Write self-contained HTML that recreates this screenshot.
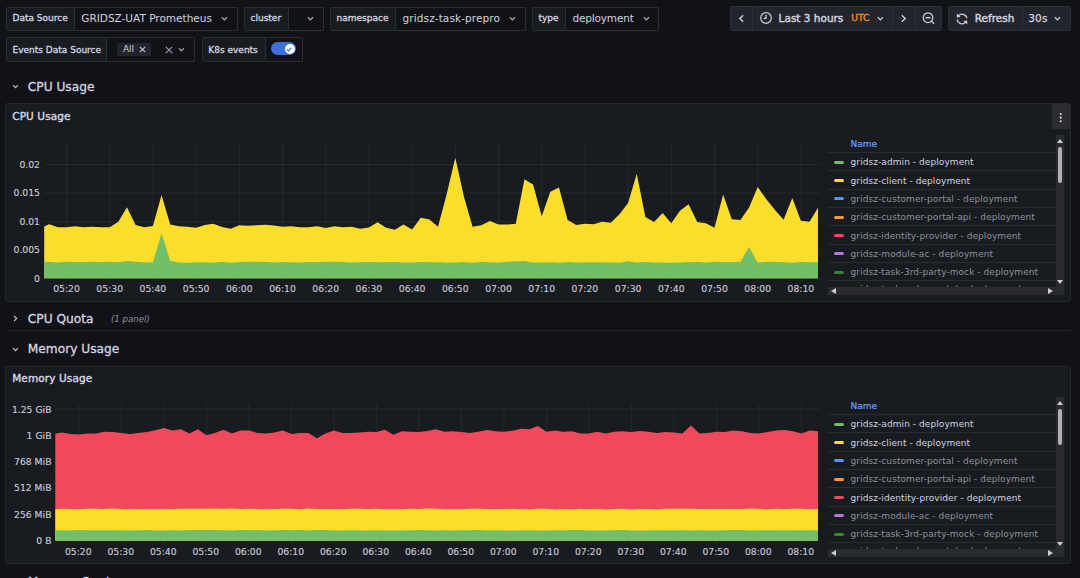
<!DOCTYPE html>
<html><head><meta charset="utf-8"><title>Kubernetes / Compute Resources</title>
<style>
*{box-sizing:border-box;margin:0;padding:0}
html,body{width:1080px;height:578px;overflow:hidden;background:#111217;color:#ccccdc;font-family:"DejaVu Sans", "Liberation Sans", sans-serif;}
body{position:relative}
.abs{position:absolute}
.vg{position:absolute;height:24.25px;display:flex;border-radius:1.5px}
.vg .lb{height:100%;background:#181b1f;border:0.75px solid #2c2e35;border-radius:1.5px 0 0 1.5px;font-size:9px;font-weight:500;display:flex;align-items:center;padding:0 0 0.6px 5.5px;color:#d6d6e4;white-space:nowrap;-webkit-text-stroke:0.3px #d6d6e4}
.vg .vl{height:100%;background:#111217;border:0.75px solid #2c2e35;border-left:none;border-radius:0 1.5px 1.5px 0;font-size:10.5px;display:flex;align-items:center;padding:0 0 1.4px 6.8px;white-space:nowrap;position:relative;color:#d2d2e0}
.chv{position:absolute;top:50%;margin-top:-2.6px;color:#adaebb}
.tb{position:absolute;top:6.3px;height:24.5px;background:#22252b;border:0.75px solid #2c2f36;border-radius:1.5px}
.tb .sep{position:absolute;top:0;bottom:0;width:0.75px;background:#2e3138}
.tbt{position:absolute;font-size:10.5px;font-weight:500;white-space:nowrap;color:#d2d2e0;top:-0.9px;height:100%;display:flex;align-items:center;-webkit-text-stroke:0.45px #d2d2e0}
.rowt{position:absolute;font-size:12.2px;font-weight:500;white-space:nowrap;color:#d5d5e3;-webkit-text-stroke:0.3px #d5d5e3;line-height:14px}
.panel{position:absolute;left:5.2px;width:1065.7px;height:198.2px;background:#181b1f;border:0.75px solid #26282e;border-radius:2.6px}
.pt{position:absolute;left:6px;top:5.3px;font-size:10.5px;font-weight:500;color:#d6d6e4;-webkit-text-stroke:0.4px #d6d6e4;line-height:12px;white-space:nowrap;letter-spacing:0.12px}
.ax{font-size:9.25px;stroke:#c8c9d6;stroke-width:0.15px;fill:#c8c9d6;font-family:"DejaVu Sans", "Liberation Sans", sans-serif}
svg.ch{position:absolute;left:0;top:0;width:1080px;height:578px;pointer-events:none}
.lg{position:absolute;left:828px;width:236.2px;height:157.8px}
.lgin{position:absolute;left:0;top:0;width:228px;height:149.3px;overflow:hidden}
.lh{height:15.6px;border-bottom:0.75px solid #2a2c32;font-size:9px;font-weight:500;color:#6e9fff;padding-left:22.6px;line-height:13.2px;-webkit-text-stroke:0.2px #6e9fff}
.lr{height:18.33px;border-bottom:0.75px solid #2a2c32;font-size:9px;color:#d4d4e2;display:flex;align-items:center;white-space:nowrap;letter-spacing:0.07px;padding-top:0.9px}
.lr.dim{color:#8f909c}
.lr i{display:block;width:10.6px;height:3px;border-radius:1.5px;margin-left:5.8px;margin-right:6.2px;flex:none}
.vsb{position:absolute;left:228.1px;top:-2.5px;width:8.1px;height:159.8px;background:#2a2b2e}
.vsb u{position:absolute;left:1.9px;width:4px;top:12px;height:35.8px;background:#b3b3b5;border-radius:2px}
.vsb .up{position:absolute;left:0.9px;top:3.8px;border-left:3px solid transparent;border-right:3px solid transparent;border-bottom:4px solid #cfcfcf}
.vsb .dn{position:absolute;left:0.9px;top:145.2px;border-left:3px solid transparent;border-right:3px solid transparent;border-top:4px solid #cfcfcf}
.hsb{position:absolute;left:0;top:149.4px;width:236.2px;height:7.9px;background:#2a2b2e}
.hsb .lf{position:absolute;left:3.2px;top:1.1px;border-top:3px solid transparent;border-bottom:3px solid transparent;border-right:5px solid #cfcfcf}
.hsb .rt{position:absolute;left:219.8px;top:1.1px;border-top:3px solid transparent;border-bottom:3px solid transparent;border-left:5px solid #cfcfcf}
.menu{position:absolute;right:0.1px;top:-0.5px;width:17.8px;height:25.1px;background:#2b2d32;border-radius:1.5px}
.menu svg{position:absolute;left:0;top:0}
</style></head><body>

<!-- variables row 1 -->
<div class="vg" style="left:6px;top:6.5px"><div class="lb" style="width:68.5px">Data Source</div><div class="vl" style="width:163.5px">GRIDSZ-UAT Prometheus<svg class="chv" style="left:146.8px" viewBox="0 0 8 6" width="6.8" height="5.1"><path d="M1 1.5 L4 4.5 L7 1.5" fill="none" stroke="currentColor" stroke-width="1.35"/></svg></div></div>
<div class="vg" style="left:244px;top:6.5px"><div class="lb" style="width:44.8px">cluster</div><div class="vl" style="width:35px"><svg class="chv" style="left:18.2px" viewBox="0 0 8 6" width="6.8" height="5.1"><path d="M1 1.5 L4 4.5 L7 1.5" fill="none" stroke="currentColor" stroke-width="1.35"/></svg></div></div>
<div class="vg" style="left:330px;top:6.5px"><div class="lb" style="width:65.8px">namespace</div><div class="vl" style="width:130px;letter-spacing:0.1px">gridsz-task-prepro<svg class="chv" style="left:113.4px" viewBox="0 0 8 6" width="6.8" height="5.1"><path d="M1 1.5 L4 4.5 L7 1.5" fill="none" stroke="currentColor" stroke-width="1.35"/></svg></div></div>
<div class="vg" style="left:532px;top:6.5px"><div class="lb" style="width:33.6px">type</div><div class="vl" style="width:93.6px;letter-spacing:-0.15px">deployment<svg class="chv" style="left:77.5px" viewBox="0 0 8 6" width="6.8" height="5.1"><path d="M1 1.5 L4 4.5 L7 1.5" fill="none" stroke="currentColor" stroke-width="1.35"/></svg></div></div>

<!-- variables row 2 -->
<div class="vg" style="left:6px;top:37.3px"><div class="lb" style="width:101.3px;padding-bottom:0;padding-top:0.4px">Events Data Source</div><div class="vl" style="width:88px;padding-left:0">
<span class="abs" style="left:9.5px;top:4.6px;width:34.6px;height:13.6px;background:#22252b;border-radius:1.5px"></span>
<span class="abs" style="left:15.6px;top:4.5px;font-size:9px;line-height:13.5px;color:#ccccdc">All</span>
<svg class="abs" style="left:31.8px;top:8.2px" width="7" height="7" viewBox="0 0 7 7"><path d="M0.8 0.8L6.2 6.2M6.2 0.8L0.8 6.2" stroke="#c8c8d6" stroke-width="1.1"/></svg>
<svg class="abs" style="left:57.6px;top:7.8px" width="8" height="8" viewBox="0 0 8 8"><path d="M0.8 0.8L7.2 7.2M7.2 0.8L0.8 7.2" stroke="#a4a5b2" stroke-width="1.05"/></svg>
<svg class="chv" style="left:71.2px;color:#a4a5b2" viewBox="0 0 8 6" width="6.8" height="5.1"><path d="M1 1.5 L4 4.5 L7 1.5" fill="none" stroke="currentColor" stroke-width="1.35"/></svg>
</div></div>
<div class="vg" style="left:201.8px;top:37.3px"><div class="lb" style="width:64px;padding-bottom:0;padding-top:0.4px">K8s events</div><div class="vl" style="width:37px;padding:0">
<span class="abs" style="left:5.6px;top:4.1px;width:24.8px;height:13px;border-radius:6.5px;background:#3d71d9"></span>
<span class="abs" style="left:18.9px;top:5.6px;width:10px;height:10px;border-radius:50%;background:#fff"></span>
<svg class="abs" style="left:20.7px;top:7.5px" width="6.4" height="6.4" viewBox="0 0 8 8"><path d="M1.2 4.2L3.2 6.2L6.9 2" fill="none" stroke="#3d71d9" stroke-width="1.5"/></svg>
</div></div>

<!-- time picker -->
<div class="tb" style="left:730.3px;width:211.5px">
<span class="sep" style="left:20.8px"></span><span class="sep" style="left:161.2px"></span><span class="sep" style="left:184.1px"></span>
<svg class="abs" style="left:6.7px;top:6.6px" width="7" height="9" viewBox="0 0 7 9"><path d="M5.2 1.2L1.8 4.5L5.2 7.8" fill="none" stroke="#d0d0dc" stroke-width="1.4"/></svg>
<svg class="abs" style="left:27.4px;top:4px" width="14" height="14" viewBox="0 0 14 14"><circle cx="7" cy="7" r="5.3" fill="none" stroke="#cfcfdd" stroke-width="1.2"/><path d="M7 3.8V7.3H4.6" fill="none" stroke="#cfcfdd" stroke-width="1.3"/></svg>
<span class="tbt" style="left:47.3px">Last 3 hours</span>
<span class="tbt" style="left:119.9px;font-size:9.2px;color:#ec8a2c;-webkit-text-stroke:0.4px #ec8a2c">UTC</span>
<svg class="abs" style="left:145.4px;top:8.6px" width="6.8" height="5.1" viewBox="0 0 8 6"><path d="M1 1.5 L4 4.5 L7 1.5" fill="none" stroke="#d0d0dc" stroke-width="1.4"/></svg>
<svg class="abs" style="left:168.3px;top:6.6px" width="7" height="9" viewBox="0 0 7 9"><path d="M1.8 1.2L5.2 4.5L1.8 7.8" fill="none" stroke="#d0d0dc" stroke-width="1.4"/></svg>
<svg class="abs" style="left:189.6px;top:4px" width="14" height="14" viewBox="0 0 14 14"><circle cx="7" cy="6.7" r="4.8" fill="none" stroke="#cfcfdd" stroke-width="1.25"/><path d="M10.5 10.2L13.1 12.8" fill="none" stroke="#cfcfdd" stroke-width="1.25"/><path d="M4.5 6.7H9.5" fill="none" stroke="#cfcfdd" stroke-width="1.5"/></svg>
</div>
<!-- refresh -->
<div class="tb" style="left:948.2px;width:122.5px">
<span class="sep" style="left:73.2px"></span>
<svg class="abs" style="left:5.9px;top:4.5px" width="14" height="14" viewBox="0 0 14 14"><g fill="none" stroke="#cfcfdd" stroke-width="1.25"><path d="M3.3 3.9A4.9 4.9 0 0 1 11.85 6.3"/><path d="M10.7 10.1A4.9 4.9 0 0 1 2.15 7.7"/></g><path d="M1.7 1.6L1.9 5.6L5.6 4.9Z M12.3 12.4L12.1 8.4L8.4 9.1Z" fill="#cfcfdd"/></svg>
<span class="tbt" style="left:25.6px">Refresh</span>
<span class="tbt" style="left:79px;font-weight:400;letter-spacing:0.2px;-webkit-text-stroke:0.25px #d2d2e0">30s</span>
<svg class="abs" style="left:105px;top:8.6px" width="6.8" height="5.1" viewBox="0 0 8 6"><path d="M1 1.5 L4 4.5 L7 1.5" fill="none" stroke="#d0d0dc" stroke-width="1.4"/></svg>
</div>

<!-- row: CPU Usage -->
<svg class="abs" style="left:12.4px;top:84.4px" width="7" height="5" viewBox="0 0 8 6"><path d="M1 1.3 L4 4.4 L7 1.3" fill="none" stroke="#c6c6d4" stroke-width="1.3"/></svg>
<div class="rowt" style="left:27.8px;top:79.9px">CPU Usage</div>

<div class="panel" style="top:103.4px"><div class="pt">CPU Usage</div><div class="menu"><svg width="17.8" height="24.4" viewBox="0 0 17.8 24.4"><circle cx="8.75" cy="10" r="1.05" fill="#d4d4de"/><circle cx="8.75" cy="13.65" r="1.05" fill="#d4d4de"/><circle cx="8.75" cy="17.3" r="1.05" fill="#d4d4de"/></svg></div></div>
<div class="lg" style="top:137.5px">
<div class="lgin">
<div class="lh">Name</div>
<div class="lr"><i style="background:#73bf69"></i><span>gridsz-admin - deployment</span></div>
<div class="lr"><i style="background:#fade2a"></i><span>gridsz-client - deployment</span></div>
<div class="lr dim"><i style="background:#5794f2"></i><span>gridsz-customer-portal - deployment</span></div>
<div class="lr dim"><i style="background:#ff9830"></i><span>gridsz-customer-portal-api - deployment</span></div>
<div class="lr dim"><i style="background:#f2495c"></i><span>gridsz-identity-provider - deployment</span></div>
<div class="lr dim"><i style="background:#b877d9"></i><span>gridsz-module-ac - deployment</span></div>
<div class="lr dim"><i style="background:#37872d"></i><span>gridsz-task-3rd-party-mock - deployment</span></div>
<div class="lr dim"><i style="background:#e0b400"></i><span style="position:relative;top:-1.4px">gridsz-task-order-portal - deployment</span></div>
</div>
<div class="vsb"><b class="up"></b><u></u><b class="dn"></b></div>
<div class="hsb"><b class="lf"></b><b class="rt"></b></div>
</div>

<!-- row: CPU Quota -->
<svg class="abs" style="left:13.4px;top:315.2px" width="5" height="7" viewBox="0 0 6 8"><path d="M1.3 1 L4.4 4 L1.3 7" fill="none" stroke="#c6c6d4" stroke-width="1.3"/></svg>
<div class="rowt" style="left:27.8px;top:312.2px">CPU Quota</div>
<div class="abs" style="left:111px;top:314.1px;font-size:8.6px;font-style:italic;color:#9091a0;line-height:11px">(1 panel)</div>
<div class="abs" style="left:6px;top:330.2px;width:1065px;height:0.75px;background:#222429"></div>

<!-- row: Memory Usage -->
<svg class="abs" style="left:12.4px;top:346.6px" width="7" height="5" viewBox="0 0 8 6"><path d="M1 1.3 L4 4.4 L7 1.3" fill="none" stroke="#c6c6d4" stroke-width="1.3"/></svg>
<div class="rowt" style="left:27.8px;top:341.6px">Memory Usage</div>

<div class="panel" style="top:366px;height:197.8px"><div class="pt">Memory Usage</div></div>
<div class="lg" style="top:399.5px">
<div class="lgin">
<div class="lh">Name</div>
<div class="lr"><i style="background:#73bf69"></i><span>gridsz-admin - deployment</span></div>
<div class="lr"><i style="background:#fade2a"></i><span>gridsz-client - deployment</span></div>
<div class="lr dim"><i style="background:#5794f2"></i><span>gridsz-customer-portal - deployment</span></div>
<div class="lr dim"><i style="background:#ff9830"></i><span>gridsz-customer-portal-api - deployment</span></div>
<div class="lr"><i style="background:#f2495c"></i><span>gridsz-identity-provider - deployment</span></div>
<div class="lr dim"><i style="background:#b877d9"></i><span>gridsz-module-ac - deployment</span></div>
<div class="lr dim"><i style="background:#37872d"></i><span>gridsz-task-3rd-party-mock - deployment</span></div>
<div class="lr dim"><i style="background:#e0b400"></i><span style="position:relative;top:-1.4px">gridsz-task-order-portal - deployment</span></div>
</div>
<div class="vsb"><b class="up"></b><u></u><b class="dn"></b></div>
<div class="hsb"><b class="lf"></b><b class="rt"></b></div>
</div>

<!-- row: Memory Quota (cut off) -->
<div class="rowt" style="left:27.8px;top:575.1px">Memory Quota</div>

<svg class="ch" viewBox="0 0 1080 578">
<clipPath id="c1"><rect x="44.2" y="136.8" width="773.8" height="141.7"/></clipPath>
<line x1="44.2" y1="164.4" x2="821" y2="164.4" stroke="rgba(204,204,220,0.1)" stroke-width="0.8"/>
<line x1="44.2" y1="192.9" x2="821" y2="192.9" stroke="rgba(204,204,220,0.1)" stroke-width="0.8"/>
<line x1="44.2" y1="221.5" x2="821" y2="221.5" stroke="rgba(204,204,220,0.1)" stroke-width="0.8"/>
<line x1="44.2" y1="250" x2="821" y2="250" stroke="rgba(204,204,220,0.1)" stroke-width="0.8"/>
<line x1="44.2" y1="278.5" x2="821" y2="278.5" stroke="rgba(204,204,220,0.1)" stroke-width="0.8"/>
<line x1="66.50" y1="141.8" x2="66.50" y2="281.5" stroke="rgba(204,204,220,0.1)" stroke-width="0.8"/>
<text x="66.50" y="292" text-anchor="middle" class="ax">05:20</text>
<line x1="109.70" y1="141.8" x2="109.70" y2="281.5" stroke="rgba(204,204,220,0.1)" stroke-width="0.8"/>
<text x="109.70" y="292" text-anchor="middle" class="ax">05:30</text>
<line x1="152.90" y1="141.8" x2="152.90" y2="281.5" stroke="rgba(204,204,220,0.1)" stroke-width="0.8"/>
<text x="152.90" y="292" text-anchor="middle" class="ax">05:40</text>
<line x1="196.10" y1="141.8" x2="196.10" y2="281.5" stroke="rgba(204,204,220,0.1)" stroke-width="0.8"/>
<text x="196.10" y="292" text-anchor="middle" class="ax">05:50</text>
<line x1="239.30" y1="141.8" x2="239.30" y2="281.5" stroke="rgba(204,204,220,0.1)" stroke-width="0.8"/>
<text x="239.30" y="292" text-anchor="middle" class="ax">06:00</text>
<line x1="282.50" y1="141.8" x2="282.50" y2="281.5" stroke="rgba(204,204,220,0.1)" stroke-width="0.8"/>
<text x="282.50" y="292" text-anchor="middle" class="ax">06:10</text>
<line x1="325.70" y1="141.8" x2="325.70" y2="281.5" stroke="rgba(204,204,220,0.1)" stroke-width="0.8"/>
<text x="325.70" y="292" text-anchor="middle" class="ax">06:20</text>
<line x1="368.90" y1="141.8" x2="368.90" y2="281.5" stroke="rgba(204,204,220,0.1)" stroke-width="0.8"/>
<text x="368.90" y="292" text-anchor="middle" class="ax">06:30</text>
<line x1="412.10" y1="141.8" x2="412.10" y2="281.5" stroke="rgba(204,204,220,0.1)" stroke-width="0.8"/>
<text x="412.10" y="292" text-anchor="middle" class="ax">06:40</text>
<line x1="455.30" y1="141.8" x2="455.30" y2="281.5" stroke="rgba(204,204,220,0.1)" stroke-width="0.8"/>
<text x="455.30" y="292" text-anchor="middle" class="ax">06:50</text>
<line x1="498.50" y1="141.8" x2="498.50" y2="281.5" stroke="rgba(204,204,220,0.1)" stroke-width="0.8"/>
<text x="498.50" y="292" text-anchor="middle" class="ax">07:00</text>
<line x1="541.70" y1="141.8" x2="541.70" y2="281.5" stroke="rgba(204,204,220,0.1)" stroke-width="0.8"/>
<text x="541.70" y="292" text-anchor="middle" class="ax">07:10</text>
<line x1="584.90" y1="141.8" x2="584.90" y2="281.5" stroke="rgba(204,204,220,0.1)" stroke-width="0.8"/>
<text x="584.90" y="292" text-anchor="middle" class="ax">07:20</text>
<line x1="628.10" y1="141.8" x2="628.10" y2="281.5" stroke="rgba(204,204,220,0.1)" stroke-width="0.8"/>
<text x="628.10" y="292" text-anchor="middle" class="ax">07:30</text>
<line x1="671.30" y1="141.8" x2="671.30" y2="281.5" stroke="rgba(204,204,220,0.1)" stroke-width="0.8"/>
<text x="671.30" y="292" text-anchor="middle" class="ax">07:40</text>
<line x1="714.50" y1="141.8" x2="714.50" y2="281.5" stroke="rgba(204,204,220,0.1)" stroke-width="0.8"/>
<text x="714.50" y="292" text-anchor="middle" class="ax">07:50</text>
<line x1="757.70" y1="141.8" x2="757.70" y2="281.5" stroke="rgba(204,204,220,0.1)" stroke-width="0.8"/>
<text x="757.70" y="292" text-anchor="middle" class="ax">08:00</text>
<line x1="800.90" y1="141.8" x2="800.90" y2="281.5" stroke="rgba(204,204,220,0.1)" stroke-width="0.8"/>
<text x="800.90" y="292" text-anchor="middle" class="ax">08:10</text>
<text x="40" y="167.70" text-anchor="end" class="ax">0.02</text>
<text x="40" y="196.20" text-anchor="end" class="ax">0.015</text>
<text x="40" y="224.80" text-anchor="end" class="ax">0.01</text>
<text x="40" y="253.30" text-anchor="end" class="ax">0.005</text>
<text x="40" y="281.80" text-anchor="end" class="ax">0</text>
<g clip-path="url(#c1)">
<path d="M40.58 278.50 L40.58 228.00 L49.22 224.20 L57.86 227.20 L66.50 227.20 L75.14 226.30 L83.78 227.30 L92.42 226.80 L101.06 227.20 L109.70 227.30 L118.34 221.70 L126.98 207.20 L135.62 225.00 L144.26 227.30 L152.90 226.00 L161.54 195.00 L170.18 224.50 L178.82 226.30 L187.46 226.70 L196.10 227.80 L204.74 225.00 L213.38 223.80 L222.02 227.00 L230.66 228.80 L239.30 225.30 L247.94 225.80 L256.58 225.30 L265.22 224.80 L273.86 225.50 L282.50 226.70 L291.14 226.30 L299.78 227.20 L308.42 227.30 L317.06 226.30 L325.70 228.00 L334.34 226.20 L342.98 227.20 L351.62 226.80 L360.26 228.70 L368.90 227.50 L377.54 222.20 L386.18 227.80 L394.82 229.70 L403.46 224.50 L412.10 229.50 L420.74 217.80 L429.38 219.50 L438.02 226.70 L446.66 194.20 L455.30 157.80 L463.94 196.70 L472.58 226.70 L481.22 225.30 L489.86 221.00 L498.50 224.50 L507.14 224.50 L515.78 223.80 L524.42 179.20 L533.06 184.40 L541.70 216.20 L550.34 191.70 L558.98 187.50 L567.62 220.00 L576.26 225.00 L584.90 223.80 L593.54 224.30 L602.18 221.70 L610.82 222.80 L619.46 214.20 L628.10 203.00 L636.74 173.80 L645.38 217.00 L654.02 222.00 L662.66 213.00 L671.30 223.30 L679.94 210.80 L688.58 204.20 L697.22 222.00 L705.86 223.30 L714.50 227.80 L723.14 194.50 L731.78 219.20 L740.42 220.00 L749.06 207.50 L757.70 187.00 L766.34 199.20 L774.98 210.00 L783.62 219.70 L792.26 198.00 L800.90 220.80 L809.54 221.70 L818.18 207.50 L826.82 215.00 L826.82 278.50 Z" fill="#f9de2b"/>
<path d="M40.58 278.50 L40.58 262.06 L49.22 261.87 L57.86 262.42 L66.50 261.78 L75.14 262.29 L83.78 262.10 L92.42 261.76 L101.06 262.26 L109.70 261.74 L118.34 262.18 L126.98 260.90 L135.62 261.80 L144.26 262.17 L152.90 262.61 L161.54 233.30 L170.18 260.80 L178.82 262.39 L187.46 262.74 L196.10 262.33 L204.74 262.14 L213.38 262.77 L222.02 261.75 L230.66 262.64 L239.30 262.02 L247.94 261.86 L256.58 261.83 L265.22 262.04 L273.86 262.60 L282.50 261.90 L291.14 262.34 L299.78 262.40 L308.42 262.11 L317.06 262.30 L325.70 261.77 L334.34 261.77 L342.98 261.93 L351.62 262.45 L360.26 262.17 L368.90 262.05 L377.54 262.34 L386.18 262.20 L394.82 262.03 L403.46 262.57 L412.10 262.47 L420.74 261.97 L429.38 262.33 L438.02 262.28 L446.66 262.66 L455.30 262.50 L463.94 262.02 L472.58 262.78 L481.22 261.83 L489.86 262.16 L498.50 262.53 L507.14 261.87 L515.78 261.20 L524.42 261.00 L533.06 262.44 L541.70 262.54 L550.34 262.33 L558.98 262.66 L567.62 262.05 L576.26 262.46 L584.90 262.35 L593.54 262.34 L602.18 262.20 L610.82 262.62 L619.46 262.74 L628.10 261.20 L636.74 262.43 L645.38 261.77 L654.02 262.47 L662.66 262.41 L671.30 262.79 L679.94 262.60 L688.58 262.01 L697.22 262.12 L705.86 262.44 L714.50 261.72 L723.14 262.21 L731.78 261.88 L740.42 261.83 L749.06 247.10 L757.70 262.55 L766.34 261.84 L774.98 261.97 L783.62 262.13 L792.26 262.66 L800.90 261.79 L809.54 262.19 L818.18 262.30 L826.82 262.67 L826.82 278.50 Z" fill="#73be69"/>
</g>
<clipPath id="c2"><rect x="55.3" y="399.2" width="762.7" height="141.59999999999997"/></clipPath>
<line x1="55.3" y1="409.2" x2="821" y2="409.2" stroke="rgba(204,204,220,0.1)" stroke-width="0.8"/>
<line x1="55.3" y1="435.2" x2="821" y2="435.2" stroke="rgba(204,204,220,0.1)" stroke-width="0.8"/>
<line x1="55.3" y1="461.6" x2="821" y2="461.6" stroke="rgba(204,204,220,0.1)" stroke-width="0.8"/>
<line x1="55.3" y1="488" x2="821" y2="488" stroke="rgba(204,204,220,0.1)" stroke-width="0.8"/>
<line x1="55.3" y1="514.4" x2="821" y2="514.4" stroke="rgba(204,204,220,0.1)" stroke-width="0.8"/>
<line x1="55.3" y1="540.8" x2="821" y2="540.8" stroke="rgba(204,204,220,0.1)" stroke-width="0.8"/>
<line x1="78.90" y1="404.2" x2="78.90" y2="543.8" stroke="rgba(204,204,220,0.1)" stroke-width="0.8"/>
<text x="78.30" y="554.5" text-anchor="middle" class="ax">05:20</text>
<line x1="121.40" y1="404.2" x2="121.40" y2="543.8" stroke="rgba(204,204,220,0.1)" stroke-width="0.8"/>
<text x="120.80" y="554.5" text-anchor="middle" class="ax">05:30</text>
<line x1="163.90" y1="404.2" x2="163.90" y2="543.8" stroke="rgba(204,204,220,0.1)" stroke-width="0.8"/>
<text x="163.30" y="554.5" text-anchor="middle" class="ax">05:40</text>
<line x1="206.40" y1="404.2" x2="206.40" y2="543.8" stroke="rgba(204,204,220,0.1)" stroke-width="0.8"/>
<text x="205.80" y="554.5" text-anchor="middle" class="ax">05:50</text>
<line x1="248.90" y1="404.2" x2="248.90" y2="543.8" stroke="rgba(204,204,220,0.1)" stroke-width="0.8"/>
<text x="248.30" y="554.5" text-anchor="middle" class="ax">06:00</text>
<line x1="291.40" y1="404.2" x2="291.40" y2="543.8" stroke="rgba(204,204,220,0.1)" stroke-width="0.8"/>
<text x="290.80" y="554.5" text-anchor="middle" class="ax">06:10</text>
<line x1="333.90" y1="404.2" x2="333.90" y2="543.8" stroke="rgba(204,204,220,0.1)" stroke-width="0.8"/>
<text x="333.30" y="554.5" text-anchor="middle" class="ax">06:20</text>
<line x1="376.40" y1="404.2" x2="376.40" y2="543.8" stroke="rgba(204,204,220,0.1)" stroke-width="0.8"/>
<text x="375.80" y="554.5" text-anchor="middle" class="ax">06:30</text>
<line x1="418.90" y1="404.2" x2="418.90" y2="543.8" stroke="rgba(204,204,220,0.1)" stroke-width="0.8"/>
<text x="418.30" y="554.5" text-anchor="middle" class="ax">06:40</text>
<line x1="461.40" y1="404.2" x2="461.40" y2="543.8" stroke="rgba(204,204,220,0.1)" stroke-width="0.8"/>
<text x="460.80" y="554.5" text-anchor="middle" class="ax">06:50</text>
<line x1="503.90" y1="404.2" x2="503.90" y2="543.8" stroke="rgba(204,204,220,0.1)" stroke-width="0.8"/>
<text x="503.30" y="554.5" text-anchor="middle" class="ax">07:00</text>
<line x1="546.40" y1="404.2" x2="546.40" y2="543.8" stroke="rgba(204,204,220,0.1)" stroke-width="0.8"/>
<text x="545.80" y="554.5" text-anchor="middle" class="ax">07:10</text>
<line x1="588.90" y1="404.2" x2="588.90" y2="543.8" stroke="rgba(204,204,220,0.1)" stroke-width="0.8"/>
<text x="588.30" y="554.5" text-anchor="middle" class="ax">07:20</text>
<line x1="631.40" y1="404.2" x2="631.40" y2="543.8" stroke="rgba(204,204,220,0.1)" stroke-width="0.8"/>
<text x="630.80" y="554.5" text-anchor="middle" class="ax">07:30</text>
<line x1="673.90" y1="404.2" x2="673.90" y2="543.8" stroke="rgba(204,204,220,0.1)" stroke-width="0.8"/>
<text x="673.30" y="554.5" text-anchor="middle" class="ax">07:40</text>
<line x1="716.40" y1="404.2" x2="716.40" y2="543.8" stroke="rgba(204,204,220,0.1)" stroke-width="0.8"/>
<text x="715.80" y="554.5" text-anchor="middle" class="ax">07:50</text>
<line x1="758.90" y1="404.2" x2="758.90" y2="543.8" stroke="rgba(204,204,220,0.1)" stroke-width="0.8"/>
<text x="758.30" y="554.5" text-anchor="middle" class="ax">08:00</text>
<line x1="801.40" y1="404.2" x2="801.40" y2="543.8" stroke="rgba(204,204,220,0.1)" stroke-width="0.8"/>
<text x="800.80" y="554.5" text-anchor="middle" class="ax">08:10</text>
<text x="51.5" y="412.50" text-anchor="end" class="ax">1.25 GiB</text>
<text x="51.5" y="438.50" text-anchor="end" class="ax">1 GiB</text>
<text x="51.5" y="464.90" text-anchor="end" class="ax">768 MiB</text>
<text x="51.5" y="491.30" text-anchor="end" class="ax">512 MiB</text>
<text x="51.5" y="517.70" text-anchor="end" class="ax">256 MiB</text>
<text x="51.5" y="544.10" text-anchor="end" class="ax">0 B</text>
<g clip-path="url(#c2)">
<path d="M53.40 540.80 L53.40 434.00 L61.90 432.40 L70.40 434.00 L78.90 434.50 L87.40 433.60 L95.90 433.40 L104.40 431.70 L112.90 431.90 L121.40 433.10 L129.90 434.00 L138.40 433.10 L146.90 432.10 L155.40 430.20 L163.90 428.00 L172.40 430.50 L180.90 429.30 L189.40 433.40 L197.90 429.30 L206.40 435.30 L214.90 432.90 L223.40 429.70 L231.90 433.40 L240.40 430.50 L248.90 430.50 L257.40 432.90 L265.90 433.40 L274.40 432.40 L282.90 430.50 L291.40 434.00 L299.90 432.90 L308.40 432.90 L316.90 438.20 L325.40 433.40 L333.90 430.50 L342.40 432.90 L350.90 432.90 L359.40 432.40 L367.90 431.70 L376.40 432.10 L384.90 429.70 L393.40 434.80 L401.90 431.20 L410.40 431.70 L418.90 432.10 L427.40 431.00 L435.90 429.30 L444.40 431.70 L452.90 431.20 L461.40 432.10 L469.90 433.10 L478.40 431.70 L486.90 430.00 L495.40 431.20 L503.90 431.70 L512.40 430.70 L520.90 428.80 L529.40 429.30 L537.90 426.10 L546.40 431.70 L554.90 430.50 L563.40 431.70 L571.90 431.20 L580.40 433.40 L588.90 433.40 L597.40 431.70 L605.90 433.40 L614.40 431.70 L622.90 431.20 L631.40 432.10 L639.90 431.00 L648.40 431.70 L656.90 432.90 L665.40 432.10 L673.90 432.40 L682.40 433.60 L690.90 425.60 L699.40 433.40 L707.90 432.90 L716.40 431.70 L724.90 432.10 L733.40 430.50 L741.90 431.20 L750.40 432.90 L758.90 433.40 L767.40 432.10 L775.90 430.50 L784.40 430.00 L792.90 431.20 L801.40 433.40 L809.90 430.50 L818.40 431.20 L826.90 431.50 L826.90 540.80 Z" fill="#f1495c"/>
<path d="M53.40 540.80 L53.40 509.26 L61.90 508.82 L70.40 508.89 L78.90 509.37 L87.40 508.74 L95.90 508.79 L104.40 509.07 L112.90 508.60 L121.40 508.90 L129.90 509.36 L138.40 509.01 L146.90 509.14 L155.40 509.32 L163.90 509.30 L172.40 508.91 L180.90 508.68 L189.40 508.65 L197.90 508.77 L206.40 508.87 L214.90 508.60 L223.40 508.68 L231.90 508.62 L240.40 509.09 L248.90 508.80 L257.40 508.89 L265.90 509.28 L274.40 508.97 L282.90 508.67 L291.40 508.87 L299.90 509.26 L308.40 508.62 L316.90 509.02 L325.40 509.03 L333.90 509.02 L342.40 509.29 L350.90 508.81 L359.40 508.73 L367.90 509.03 L376.40 508.86 L384.90 509.25 L393.40 509.28 L401.90 509.25 L410.40 508.78 L418.90 508.88 L427.40 508.62 L435.90 508.81 L444.40 509.37 L452.90 509.35 L461.40 509.36 L469.90 508.78 L478.40 508.76 L486.90 509.10 L495.40 509.27 L503.90 509.12 L512.40 508.67 L520.90 509.33 L529.40 509.20 L537.90 508.74 L546.40 508.87 L554.90 509.38 L563.40 508.92 L571.90 509.18 L580.40 508.70 L588.90 509.32 L597.40 508.72 L605.90 509.38 L614.40 508.88 L622.90 508.70 L631.40 509.38 L639.90 509.02 L648.40 508.95 L656.90 509.26 L665.40 508.80 L673.90 508.79 L682.40 508.81 L690.90 508.70 L699.40 508.88 L707.90 509.07 L716.40 508.94 L724.90 509.00 L733.40 509.02 L741.90 508.95 L750.40 508.60 L758.90 508.74 L767.40 509.18 L775.90 508.86 L784.40 509.04 L792.90 508.68 L801.40 508.80 L809.90 509.22 L818.40 509.05 L826.90 509.33 L826.90 540.80 Z" fill="#f9de2b"/>
<path d="M53.40 540.80 L53.40 530.52 L61.90 530.25 L70.40 530.53 L78.90 530.09 L87.40 530.14 L95.90 530.29 L104.40 530.16 L112.90 530.25 L121.40 530.34 L129.90 530.41 L138.40 530.37 L146.90 530.03 L155.40 530.47 L163.90 530.48 L172.40 530.24 L180.90 530.38 L189.40 530.04 L197.90 530.10 L206.40 530.03 L214.90 530.09 L223.40 530.22 L231.90 530.52 L240.40 530.09 L248.90 530.21 L257.40 530.07 L265.90 530.60 L274.40 530.29 L282.90 530.06 L291.40 530.16 L299.90 530.10 L308.40 530.57 L316.90 530.09 L325.40 530.02 L333.90 530.59 L342.40 530.42 L350.90 530.22 L359.40 530.46 L367.90 530.47 L376.40 530.13 L384.90 530.59 L393.40 530.48 L401.90 530.44 L410.40 530.31 L418.90 530.02 L427.40 530.17 L435.90 530.42 L444.40 530.27 L452.90 530.59 L461.40 530.22 L469.90 530.14 L478.40 530.12 L486.90 530.54 L495.40 530.29 L503.90 530.48 L512.40 530.40 L520.90 530.47 L529.40 530.29 L537.90 530.47 L546.40 530.48 L554.90 530.24 L563.40 530.57 L571.90 530.10 L580.40 530.09 L588.90 530.48 L597.40 530.50 L605.90 530.39 L614.40 530.33 L622.90 530.01 L631.40 530.39 L639.90 530.56 L648.40 530.52 L656.90 530.13 L665.40 530.18 L673.90 530.35 L682.40 530.25 L690.90 530.55 L699.40 530.27 L707.90 530.54 L716.40 530.55 L724.90 530.32 L733.40 530.01 L741.90 530.11 L750.40 530.48 L758.90 530.28 L767.40 530.33 L775.90 530.31 L784.40 530.47 L792.90 530.34 L801.40 530.17 L809.90 530.30 L818.40 530.46 L826.90 530.27 L826.90 540.80 Z" fill="#73be69"/>
</g>
</svg>
</body></html>
